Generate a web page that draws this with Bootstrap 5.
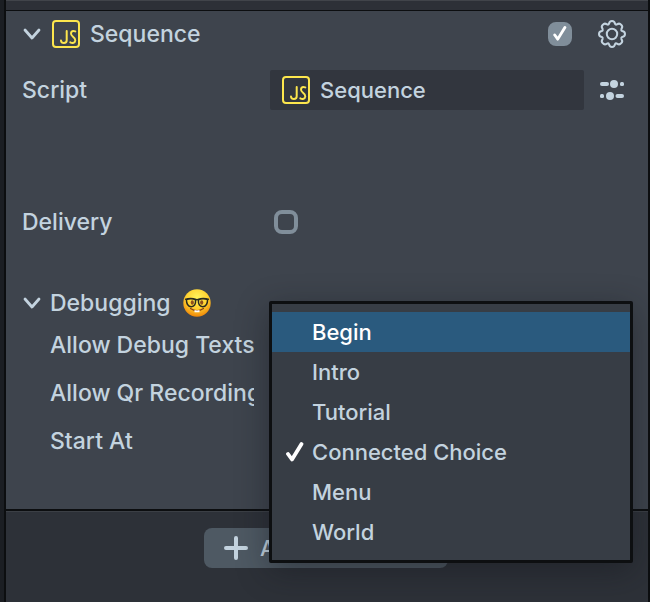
<!DOCTYPE html>
<html lang="en" data-bs-theme="dark">
<head>
<meta charset="utf-8">
<meta name="viewport" content="width=device-width, initial-scale=1">
<title>Sequence inspector</title>
<link href="https://cdn.jsdelivr.net/npm/bootstrap@5.3.0/dist/css/bootstrap.min.css" rel="stylesheet">
<style>
  body { font-family: Inter, "Liberation Sans", sans-serif; font-size: 23px; font-weight: 500; line-height: 32px; color: #c3d3df; background: #1b1e23; }
  .inspector { border-left: 2px solid #0c0e10; border-right: 2px solid #0c0e10; margin-left: 4px; background: #2d3138; }
  .top-strip { height: 11px; background: #2d3037; border-top: 1px solid #41444a; border-bottom: 1px solid #0c0e10; }
  .component { background: #3e444d; padding: 1px 22px 44px 16px; border-bottom: 2px solid #0c0e10; }
  .head-row { height: 44px; }
  .field-row { height: 40px; }
  .script-row { margin-top: 14px; }
  .delivery-row { margin-top: 92px; }
  .group-row { height: 36px; margin-top: 43px; }
  .sub-row { height: 48px; padding-left: 28px; }
  .fold { width: 20px; height: 28px; color: inherit; }
  .label-col { width: 232px; margin-right: 16px; overflow: hidden; white-space: nowrap; flex: none; }
  .sub-row .label-col { width: 204px; }
  .asset { background: #32363e; color: inherit; font-size: 22px; font-weight: 500; border-radius: 2px; padding: 0 12px; height: 40px; margin-right: 14px; gap: 10px; }
  .tick { width: 24px; height: 24px; margin: 0; }
  .tick[type=checkbox] { border: 4px solid #808e9a; border-radius: 8px; background-color: transparent; }
  .tick[type=checkbox]:checked { background-color: #808e9a; background-image: none; }
  .tick-mark { left: 5px; top: 4px; pointer-events: none; }
  .nerd { margin-left: 12px; }
  .menu { --bs-dropdown-bg: #373d45; top: -116px; left: -1px; right: -7px; padding: 8px 0; border: 3px solid #0d0f11; border-radius: 2px; box-shadow: 0 8px 32px rgba(20, 22, 28, .45); }
  .menu .dropdown-item { height: 40px; padding: 0 0 0 14px; font-size: 22px; font-weight: 500; color: #c3d3df; }
  .menu .dropdown-item.active { background: #2a5a7e; color: #fff; }
  .slot { width: 26px; flex: none; }
  .footer-bar { border-top: 1px solid #3b3f45; padding: 16px 2px 34px 0; }
  .add { width: 244px; height: 40px; background: #4e5963; color: #c3d3df; border-radius: 8px; padding: 0 20px; font-size: 22px; font-weight: 500; gap: 12px; }
</style>
<script src="https://cdn.jsdelivr.net/npm/bootstrap@5.3.0/dist/js/bootstrap.bundle.min.js"></script>
</head>
<body>
<svg class="d-none" aria-hidden="true">
  <symbol id="js" viewBox="0 0 28 28"><g fill="none" stroke="#fce64d" stroke-width="2" stroke-linecap="round" stroke-linejoin="round"><rect x="1" y="1" width="26" height="26" rx="3"/><path d="M14.700 11v9.200q0 2.800-2.800 2.800-2.600 0-2.900-2.400M23.300 11.400q-3.900-1.200-4.300 1.700c-.2 2 .8 2.800 2 3.700 1.500 1.100 2.500 1.900 2.300 3.700-.3 2.600-3 3-5 1.800"/></g></symbol>
  <symbol id="chevron" viewBox="0 0 20 28"><path d="M3 10l7 8 7-8" fill="none" stroke="currentColor" stroke-width="2.800" stroke-linecap="round" stroke-linejoin="round"/></symbol>
  <symbol id="check" viewBox="0 0 18 20"><path d="M2 12l4 5.500L15.500 2" fill="none" stroke="#fff" stroke-width="3.800" stroke-linecap="round" stroke-linejoin="round"/></symbol>
</svg>
<div class="inspector min-vh-100">
  <div class="top-strip"></div>
  <main class="component">
    <div class="head-row d-flex align-items-center">
      <button class="btn p-0 border-0 fold d-flex" type="button" aria-label="Collapse Sequence"><svg width="20" height="28"><use href="#chevron"/></svg></button>
      <svg class="ms-2 me-2" width="32" height="28" viewBox="0 0 32 28" aria-hidden="true"><use href="#js" x="2" width="28" height="28"/></svg>
      <label for="enabled" class="flex-grow-1">Sequence</label>
      <span class="position-relative d-flex">
        <input class="form-check-input tick" type="checkbox" id="enabled" checked>
        <svg class="tick-mark position-absolute" width="14" height="15"><use href="#check"/></svg>
      </span>
      <button class="btn p-0 border-0 d-flex ms-4" type="button" aria-label="Settings">
        <svg width="30" height="28" viewBox="0 0 30 28" fill="none" stroke="#c3d3df" stroke-width="2" stroke-linejoin="round"><circle cx="16" cy="14" r="5.200"/><path d="M13 3.800Q13.400 1 16 1T19 3.800Q19.600 5 21 4.400 23.500 2.600 25.200 4.800 27.200 6.500 25.400 8.900 24.900 10.400 26.200 11 29 11.400 29 14T26.200 17Q24.900 17.600 25.400 19.100 27.200 21.500 25.200 23.200 23.500 25.400 21 23.600 19.600 23 19 24.200 18.600 27 16 27T13 24.200Q12.400 23 11 23.600 8.500 25.400 6.800 23.200 4.800 21.500 6.600 19.100 7.100 17.600 5.800 17 3 16.600 3 14T5.800 11Q7.100 10.400 6.600 8.900 4.800 6.500 6.800 4.800 8.500 2.600 11 4.400 12.400 5 13 3.800Z"/></svg>
      </button>
    </div>
    <div class="field-row script-row d-flex align-items-center">
      <div class="label-col" id="scriptLabel">Script</div>
      <button class="btn border-0 asset flex-grow-1 d-flex align-items-center text-start" type="button" aria-labelledby="scriptLabel scriptName">
        <svg class="flex-shrink-0" width="28" height="28"><use href="#js"/></svg><span id="scriptName">Sequence</span>
      </button>
      <button class="btn p-0 border-0 d-flex" type="button" aria-label="Script options">
        <svg width="28" height="24" viewBox="0 0 28 24" fill="#c3d3df"><rect x="2" y="4" width="9" height="4" rx="2"/><rect x="22" y="4" width="4" height="4" rx="1.500"/><rect x="2" y="16" width="4" height="4" rx="1.500"/><rect x="17.500" y="16" width="8.500" height="4" rx="2"/><circle cx="16" cy="6" r="4"/><circle cx="12" cy="18" r="4"/></svg>
      </button>
    </div>
    <div class="field-row delivery-row d-flex align-items-center">
      <label class="label-col" for="delivery">Delivery</label>
      <input class="form-check-input tick ms-1" type="checkbox" id="delivery">
    </div>
    <div class="group-row d-flex align-items-center">
      <button class="btn p-0 border-0 fold d-flex me-2" type="button" aria-label="Collapse Debugging"><svg width="20" height="28"><use href="#chevron"/></svg></button>
      <span>Debugging</span>
      <svg class="nerd" width="28" height="28" viewBox="0 0 28 28" role="img" aria-label="Nerd face">
        <defs><radialGradient id="skin" cx=".5" cy=".3" r=".72"><stop offset="0" stop-color="#fff45c"/><stop offset=".55" stop-color="#ffd02f"/><stop offset="1" stop-color="#ee8206"/></radialGradient></defs>
        <circle cx="14" cy="14" r="13.700" fill="url(#skin)"/>
        <ellipse cx="9.300" cy="13.500" rx="1.600" ry="2.300" fill="#91501c"/><ellipse cx="18.700" cy="13.500" rx="1.600" ry="2.300" fill="#91501c"/>
        <path d="M7.500 19.500q6.500 4.500 13 0" fill="none" stroke="#854017" stroke-width="1.200" stroke-linecap="round"/>
        <path d="M11.500 21q2.500.8 5 0v2.200h-5z" fill="#fff"/>
        <path d="M2 10.400q6-2 11 0 1 .5 2 0 5-2 11 0M3.400 10.500q5-1.700 9.200.2.300 7-4.300 7-4.800 0-4.900-7.200M24.600 10.500q-5-1.700-9.200.2-.3 7 4.300 7 4.800 0 4.900-7.200" fill="none" stroke="#292a20" stroke-width="1.500"/>
      </svg>
    </div>
    <div class="sub-row d-flex align-items-center"><div class="label-col">Allow Debug Texts</div></div>
    <div class="sub-row d-flex align-items-center"><div class="label-col">Allow Qr Recordings</div></div>
    <div class="sub-row d-flex align-items-stretch">
      <div class="label-col align-self-center" id="startLabel">Start At</div>
      <div class="position-relative flex-grow-1">
        <div class="dropdown-menu show menu" role="listbox" aria-labelledby="startLabel">
          <button class="dropdown-item active d-flex align-items-center" type="button" role="option"><span class="slot"></span>Begin</button>
          <button class="dropdown-item d-flex align-items-center" type="button" role="option"><span class="slot"></span>Intro</button>
          <button class="dropdown-item d-flex align-items-center" type="button" role="option"><span class="slot"></span>Tutorial</button>
          <button class="dropdown-item d-flex align-items-center" type="button" role="option" aria-selected="true"><span class="slot d-flex"><svg width="18" height="20"><use href="#check"/></svg></span>Connected Choice</button>
          <button class="dropdown-item d-flex align-items-center" type="button" role="option"><span class="slot"></span>Menu</button>
          <button class="dropdown-item d-flex align-items-center" type="button" role="option"><span class="slot"></span>World</button>
        </div>
      </div>
    </div>
  </main>
  <footer class="footer-bar d-flex justify-content-center">
    <button class="btn border-0 add d-flex align-items-center" type="button"><svg class="flex-shrink-0" width="24" height="24" viewBox="0 0 24 24" stroke="#c3d3df" stroke-width="4" stroke-linecap="round"><path d="M12 2v20M2 12h20"/></svg><span class="text-nowrap">Add Component</span></button>
  </footer>
</div>
</body>
</html>
